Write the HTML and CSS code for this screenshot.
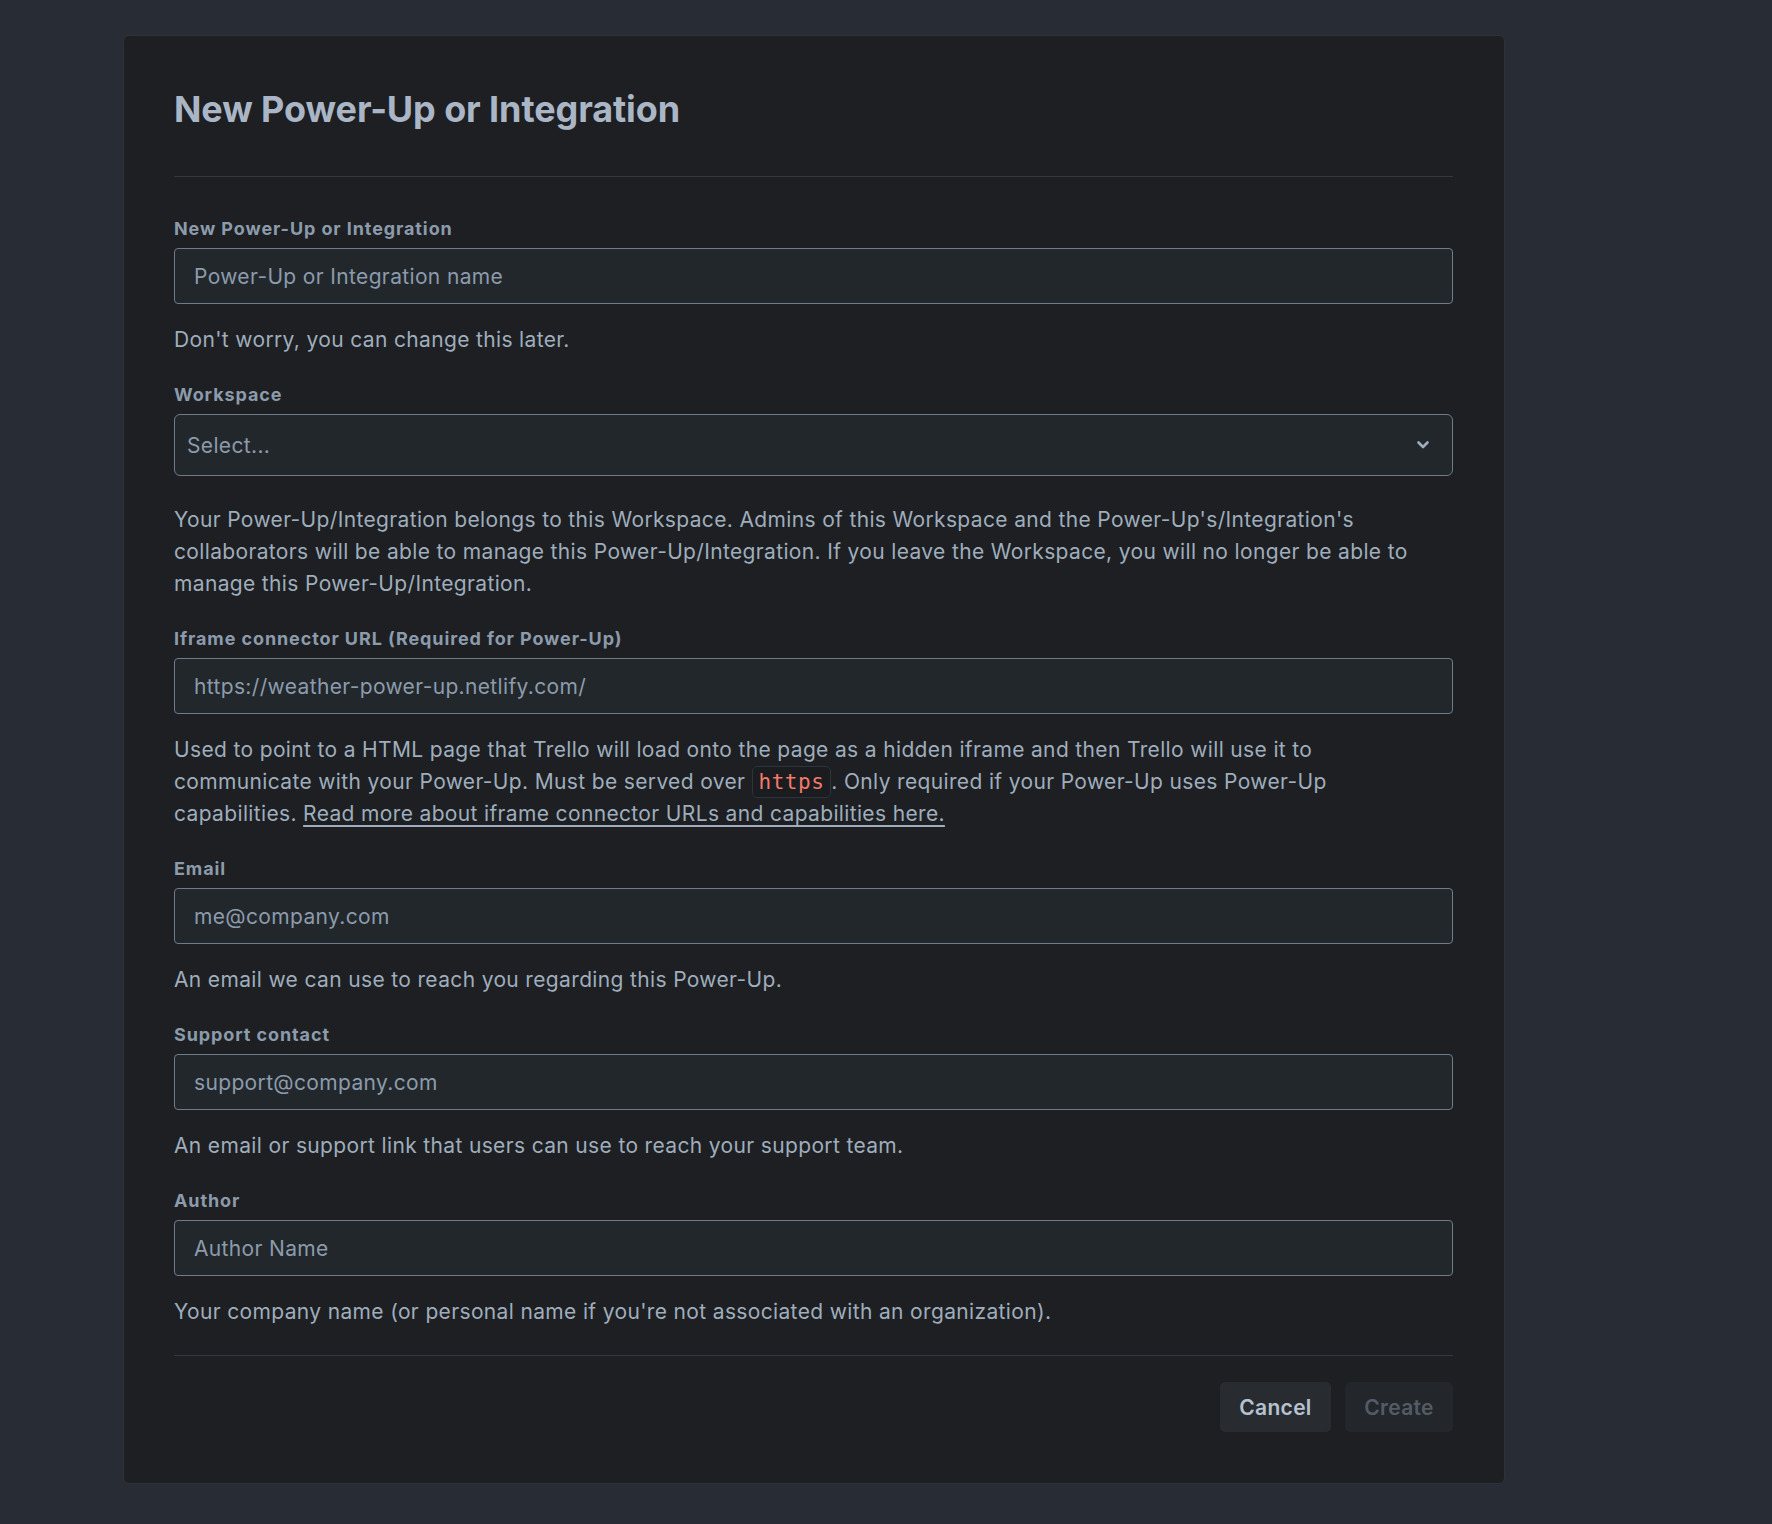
FILE: index.html
```html
<!DOCTYPE html>
<html lang="en">
<head>
<meta charset="utf-8">
<title>New Power-Up or Integration</title>
<link rel="stylesheet" href="styles.css">
</head>
<body>
<div class="page">
  <section class="card">
    <h1 class="title">New Power-Up or Integration</h1>
    <hr class="divider">
    <form class="form">
      <div class="field">
        <label class="label">New Power-Up or Integration</label>
        <input class="input" type="text" placeholder="Power-Up or Integration name">
        <p class="help">Don't worry, you can change this later.</p>
      </div>
      <div class="field">
        <label class="label">Workspace</label>
        <div class="select">
          <span class="select-text">Select...</span>
          <svg class="chevron" width="14" height="10" viewBox="0 0 14 10"><path d="M2.5 2.5 L7 7 L11.5 2.5" fill="none" stroke="#9fadbc" stroke-width="2.6" stroke-linecap="round" stroke-linejoin="round"/></svg>
        </div>
        <p class="help help-wide">Your Power-Up/Integration belongs to this Workspace. Admins of this Workspace and the Power-Up's/Integration's collaborators will be able to manage this Power-Up/Integration. If you leave the Workspace, you will no longer be able to manage this Power-Up/Integration.</p>
      </div>
      <div class="field">
        <label class="label">Iframe connector URL (Required for Power-Up)</label>
        <input class="input" type="text" placeholder="https://weather-power-up.netlify.com/">
        <p class="help">Used to point to a HTML page that Trello will load onto the page as a hidden iframe and then Trello will use it to communicate with your Power-Up. Must be served over <code class="code">https</code>. Only required if your Power-Up uses Power-Up capabilities. <a class="link" href="#">Read more about iframe connector URLs and capabilities here.</a></p>
      </div>
      <div class="field">
        <label class="label">Email</label>
        <input class="input" type="text" placeholder="me@company.com">
        <p class="help">An email we can use to reach you regarding this Power-Up.</p>
      </div>
      <div class="field">
        <label class="label">Support contact</label>
        <input class="input" type="text" placeholder="support@company.com">
        <p class="help">An email or support link that users can use to reach your support team.</p>
      </div>
      <div class="field">
        <label class="label">Author</label>
        <input class="input" type="text" placeholder="Author Name">
        <p class="help">Your company name (or personal name if you're not associated with an organization).</p>
      </div>
      <hr class="divider divider-footer">
      <div class="actions">
        <button type="button" class="btn btn-cancel">Cancel</button>
        <button type="button" class="btn btn-create" disabled>Create</button>
      </div>
    </form>
  </section>
</div>
</body>
</html>
```

FILE: styles.css
```css
* { box-sizing: border-box; }

html, body {
  margin: 0;
  padding: 0;
  background: #282c34;
}

body {
  font-family: Inter, "Noto Sans", "Liberation Sans", sans-serif;
  color: #9fadbc;
  min-height: 1524px;
}

.page {
  padding: 35px 0 40px 123px;
}

.card {
  width: 1382px;
  height: 1449px;
  background: #1d1f22;
  border: 1px solid #2e333a;
  border-radius: 6px;
  padding: 52px 51px 51px 50px;
}

.title {
  margin: 0;
  font-size: 36px;
  line-height: 43px;
  font-weight: 700;
  color: #aab6c5;
  letter-spacing: -0.1px;
}

.divider {
  margin: 45px 0 0 0;
  border: 0;
  border-top: 1px solid #323840;
  height: 0;
}

.form {
  display: flex;
  flex-direction: column;
}

.field {
  display: flex;
  flex-direction: column;
  margin-top: 29px;
}

.field:first-child {
  margin-top: 42px;
}

.label {
  font-size: 18px;
  line-height: 20px;
  font-weight: 700;
  letter-spacing: 0.9px;
  color: #8c9bab;
  margin-bottom: 9px;
}

.input {
  height: 56px;
  width: 100%;
  background: #22272b;
  border: 1.5px solid #6e7b8b;
  border-radius: 4px;
  padding: 0 19px;
  font-family: inherit;
  font-size: 21px;
  letter-spacing: 0.35px;
  color: #b6c2cf;
  outline: none;
}

.input::placeholder {
  color: #8c9bab;
  opacity: 1;
}

.select {
  height: 62px;
  background: #22272b;
  border: 1.5px solid #6e7b8b;
  border-radius: 6px;
  display: flex;
  align-items: center;
  justify-content: space-between;
  padding: 0 22px 0 12px;
}

.select-text {
  font-size: 21px;
  letter-spacing: 0.35px;
  color: #8c9bab;
}

.chevron {
  display: block;
}

.help {
  margin: 20px 0 0 0;
  font-size: 21px;
  letter-spacing: 0.35px;
  line-height: 32px;
  color: #9fadbc;
}

.help-wide { margin-top: 28px; }

.code {
  font-family: "DejaVu Sans Mono", "Liberation Mono", monospace;
  font-size: 21px;
  line-height: 1;
  letter-spacing: 0.5px;
  color: #f27a6a;
  background: #1a1c20;
  border: 1.5px solid #2e343b;
  border-radius: 5px;
  padding: 3px 6px;
}

.link {
  color: #9fadbc;
  text-decoration: underline;
  text-underline-offset: 4px;
}

.divider-footer {
  margin-top: 27px;
}

.actions {
  display: flex;
  justify-content: flex-end;
  gap: 14px;
  margin-top: 26px;
}

.btn {
  height: 50px;
  border: 0;
  border-radius: 5px;
  font-family: inherit;
  font-size: 21px;
  letter-spacing: 0.3px;
  font-weight: 600;
  padding: 0;
}

.btn-cancel {
  background: #282c31;
  color: #b6c2cf;
  width: 111px;
}

.btn-create {
  background: #23262a;
  color: #535c66;
  width: 108px;
}
```
